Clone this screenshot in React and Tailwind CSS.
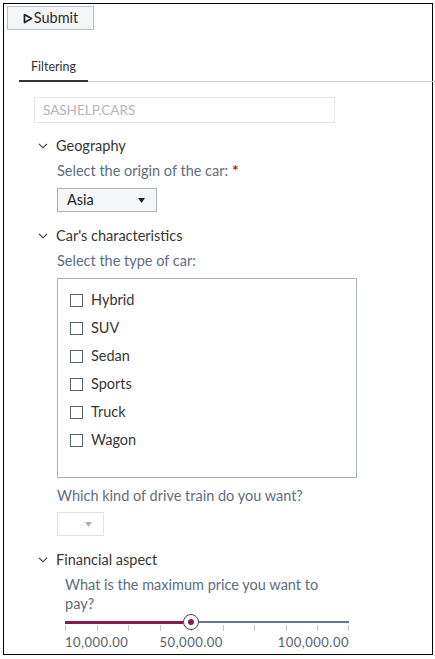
import { useState } from 'react';

const carTypes = ['Hybrid', 'SUV', 'Sedan', 'Sports', 'Truck', 'Wagon'];

const Chevron = () => (
  <svg width="10" height="6" viewBox="0 0 10 6" className="shrink-0">
    <path d="M1 0.8 L5 4.8 L9 0.8" fill="none" stroke="#333" strokeWidth="1.1" />
  </svg>
);

const Caret = ({ color = '#222' }) => (
  <svg width="7" height="5" viewBox="0 0 7 5">
    <path d="M0 0 H7 L3.5 5 Z" fill={color} />
  </svg>
);

const SectionHeader = ({ title }) => (
  <div className="flex items-center h-[20px] ml-[34px] gap-[8px]">
    <Chevron />
    <span className="text-[14.5px] text-[#363636]">{title}</span>
  </div>
);

const Slider = () => {
  const min = 10000;
  const max = 100000;
  const value = 50000;
  const ticks = Array.from({ length: 10 }, (_, i) => i / 9);
  const pct = ((value - min) / (max - min)) * 100;

  return (
    <div className="ml-[61px] w-[284px] mt-[5px]">
      <div className="relative h-[12px]">
        {/* track */}
        <div className="absolute left-0 right-0 top-[3px] h-[1.5px] bg-[#6b778a]" />
        <div className="absolute left-0 top-[2.5px] h-[3px] bg-[#8c1a4b]" style={{ width: `calc(${pct}% - 8px)` }} />
        {ticks.map((t, i) => (
          <div
            key={i}
            className="absolute top-[7px] w-px h-[6px] bg-[#c4c8ce]"
            style={{ left: `calc(${t * 100}% - ${i === ticks.length - 1 ? 1 : 0}px)` }}
          />
        ))}
        <div
          className="absolute top-[-4px] w-[16px] h-[16px] rounded-full border border-[#3b4657] bg-white flex items-center justify-center"
          style={{ left: `calc(${pct}% - 8px)` }}
        >
          <div className="w-[6px] h-[6px] rounded-full bg-[#8c1a4b]" />
        </div>
      </div>
      <div className="relative h-[18px] mt-[3px] text-[13px] tracking-[0.5px] text-[#5a6270]">
        <span className="absolute left-0">10,000.00</span>
        <span className="absolute -translate-x-1/2" style={{ left: `${pct}%` }}>50,000.00</span>
        <span className="absolute right-0">100,000.00</span>
      </div>
    </div>
  );
};

export default function App() {
  const [checked, setChecked] = useState({});

  return (
    <div className="w-[435px] h-[659px] bg-white overflow-hidden font-['Lato',sans-serif]">
      <div className="ml-[3px] mt-[3px] w-[430px] h-[652px] border border-black">
        <button className="mt-[2px] ml-[3px] w-[87px] h-[24px] flex items-center justify-center gap-[1px] bg-[#f5f6f8] border border-[#b9bec5] text-[14.5px] text-[#2b2b2b]">
          <svg width="10" height="11" viewBox="0 0 10 11">
            <path d="M1.5 1.5 L8.5 5.5 L1.5 9.5 Z" fill="none" stroke="#222" strokeWidth="1.7" strokeLinejoin="round" />
          </svg>
          Submit
        </button>

        <div className="mt-[22px] ml-[15px] -mr-[4px] flex border-b border-[#d2d2d2]">
          <div className="w-[69px] text-center pt-[7px] pb-[5px] text-[12.5px] leading-[16px] text-[#333] border-b-2 border-[#333] -mb-px">
            Filtering
          </div>
        </div>

        <div className="mt-[15px] ml-[30px] w-[301px] h-[26px] border border-[#e6e6e6] flex items-center px-[8px] text-[13.5px] text-[#b5b5b5]">
          SASHELP.CARS
        </div>

        <div className="mt-[13px]">
          <SectionHeader title="Geography" />
        </div>
        <div className="mt-[5px] ml-[53px] h-[20px] text-[14.5px] text-[#616c7e] flex items-center">
          Select the origin of the car:<span className="ml-[4px] text-[#d0021b] font-bold">*</span>
        </div>
        <div className="mt-[7px] ml-[53px] w-[100px] h-[24px] bg-[#f5f6f8] border border-[#a9b1bb] flex items-center justify-between pl-[9px] pr-[11px] text-[14.5px] text-[#222]">
          <span>Asia</span>
          <Caret />
        </div>

        <div className="mt-[14px]">
          <SectionHeader title="Car's characteristics" />
        </div>
        <div className="mt-[5px] ml-[53px] h-[20px] text-[14.5px] text-[#616c7e] flex items-center">
          Select the type of car:
        </div>
        <div className="mt-[7px] ml-[53px] w-[300px] h-[200px] border border-[#a9b2bd] pt-[7px] pl-[12px]">
          {carTypes.map((t) => (
            <label key={t} className="flex items-center h-[28px] gap-[8px] text-[14.5px] text-[#363636] cursor-pointer">
              <span
                onClick={() => setChecked((c) => ({ ...c, [t]: !c[t] }))}
                className="w-[13px] h-[13px] border border-[#5a6475] bg-white flex items-center justify-center"
              >
                {checked[t] && <span className="w-[7px] h-[7px] bg-[#5a6475]" />}
              </span>
              {t}
            </label>
          ))}
        </div>

        <div className="mt-[8px] ml-[53px] h-[20px] text-[14.5px] text-[#616c7e] flex items-center">
          Which kind of drive train do you want?
        </div>
        <div className="mt-[6px] ml-[53px] w-[47px] h-[24px] border border-[#e2e2e2] flex items-center justify-end pr-[11px]">
          <Caret color="#b0b0b0" />
        </div>

        <div className="mt-[14px]">
          <SectionHeader title="Financial aspect" />
        </div>
        <div className="mt-[5px] ml-[61px] w-[272px] text-[14.5px] leading-[19px] text-[#616c7e]">
          What is the maximum price you want to pay?
        </div>
        <Slider />
      </div>
    </div>
  );
}
